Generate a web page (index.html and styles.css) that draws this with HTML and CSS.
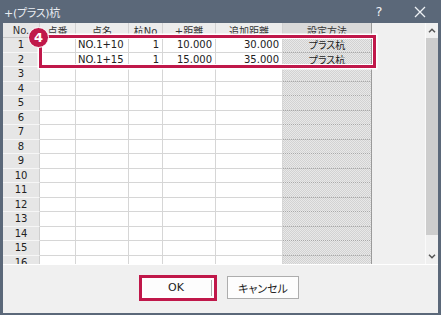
FILE: index.html
```html
<!DOCTYPE html>
<html lang="ja">
<head>
<meta charset="utf-8">
<title>+(プラス)杭</title>
<link rel="stylesheet" href="styles.css">
</head>
<body>
<div class="window">
  <div class="titlebar">
    <span class="title">+(プラス)杭</span>
    <span class="help">?</span>
    <span class="close"><svg width="12" height="12" viewBox="0 0 12 12"><path d="M1 1L11 11M11 1L1 11" stroke="#eef1f5" stroke-width="1.3" fill="none"/></svg></span>
  </div>
  <div class="main">
    <div class="gridarea">
      <div class="grid">
        <div class="h rhh">No.</div><div class="h">点番</div><div class="h">点名</div><div class="h">杭No</div><div class="h">+距離</div><div class="h">追加距離</div><div class="h hs">設定方法</div>

        <div class="rh">1</div><div class="c"></div><div class="c l">NO.1+10</div><div class="c r">1</div><div class="c r">10.000</div><div class="c r">30.000</div><div class="c s">プラス杭</div>
        <div class="rh">2</div><div class="c"></div><div class="c l">NO.1+15</div><div class="c r">1</div><div class="c r">15.000</div><div class="c r">35.000</div><div class="c s">プラス杭</div>
        <div class="rh">3</div><div class="c"></div><div class="c"></div><div class="c"></div><div class="c"></div><div class="c"></div><div class="c s"></div>
        <div class="rh">4</div><div class="c"></div><div class="c"></div><div class="c"></div><div class="c"></div><div class="c"></div><div class="c s"></div>
        <div class="rh">5</div><div class="c"></div><div class="c"></div><div class="c"></div><div class="c"></div><div class="c"></div><div class="c s"></div>
        <div class="rh">6</div><div class="c"></div><div class="c"></div><div class="c"></div><div class="c"></div><div class="c"></div><div class="c s"></div>
        <div class="rh">7</div><div class="c"></div><div class="c"></div><div class="c"></div><div class="c"></div><div class="c"></div><div class="c s"></div>
        <div class="rh">8</div><div class="c"></div><div class="c"></div><div class="c"></div><div class="c"></div><div class="c"></div><div class="c s"></div>
        <div class="rh">9</div><div class="c"></div><div class="c"></div><div class="c"></div><div class="c"></div><div class="c"></div><div class="c s"></div>
        <div class="rh">10</div><div class="c"></div><div class="c"></div><div class="c"></div><div class="c"></div><div class="c"></div><div class="c s"></div>
        <div class="rh">11</div><div class="c"></div><div class="c"></div><div class="c"></div><div class="c"></div><div class="c"></div><div class="c s"></div>
        <div class="rh">12</div><div class="c"></div><div class="c"></div><div class="c"></div><div class="c"></div><div class="c"></div><div class="c s"></div>
        <div class="rh">13</div><div class="c"></div><div class="c"></div><div class="c"></div><div class="c"></div><div class="c"></div><div class="c s"></div>
        <div class="rh">14</div><div class="c"></div><div class="c"></div><div class="c"></div><div class="c"></div><div class="c"></div><div class="c s"></div>
        <div class="rh">15</div><div class="c"></div><div class="c"></div><div class="c"></div><div class="c"></div><div class="c"></div><div class="c s"></div>
        <div class="rh">16</div><div class="c"></div><div class="c"></div><div class="c"></div><div class="c"></div><div class="c"></div><div class="c s"></div>
      </div>
    </div>
    <div class="scrollbar">
      <div class="arrow"><svg width="8" height="5" viewBox="0 0 8 5"><path d="M1 4.2L4 1.2L7 4.2" stroke="#555" stroke-width="1.5" fill="none"/></svg></div>
      <div class="thumb"></div>
      <div class="track"></div>
      <div class="arrow"><svg width="8" height="5" viewBox="0 0 8 5"><path d="M1 0.8L4 3.8L7 0.8" stroke="#555" stroke-width="1.5" fill="none"/></svg></div>
    </div>
  </div>
  <div class="footer">
    <button class="btn ok">OK</button>
    <button class="btn">キャンセル</button>
  </div>
  <div class="annot-box"></div>
  <div class="badge">4</div>
</div>
</body>
</html>
```
FILE: styles.css
```css
body {
  margin: 0;
}
.window {
  position: relative;
  width: 441px;
  height: 315px;
  background: #5b6879;
  display: flex;
  flex-direction: column;
  font-family: "DejaVu Sans", "Noto Sans CJK JP", sans-serif;
  font-feature-settings: "palt";
  color: #222;
  overflow: hidden;
}
.titlebar {
  height: 23px;
  flex: none;
  display: flex;
  align-items: center;
  color: #e9edf2;
  padding-left: 4px;
}
.title {
  flex: 1;
  font-size: 11px;
  letter-spacing: -0.3px;
}
.help {
  width: 20px;
  text-align: center;
  font-size: 13px;
  margin-right: 10px;
  color: #eef1f5;
}
.close {
  width: 42px;
  display: flex;
  justify-content: center;
  align-items: center;
}
.main {
  height: 241px;
  flex: none;
  display: flex;
  margin: 0 3px;
}
.gridarea {
  flex: 1;
  background: #f0f0f0;
  overflow: hidden;
}
.grid {
  display: grid;
  grid-template-columns: 37px 36px 53px 34px 53px 67px 89px;
  grid-template-rows: 15px;
  grid-auto-rows: 14.5px;
  width: 369px;
  font-size: 10px;
}
.grid > div {
  box-sizing: border-box;
  display: flex;
  align-items: center;
  white-space: nowrap;
  overflow: hidden;
}
.h {
  background: #ececec;
  border-right: 1px solid #d2d2d2;
  border-bottom: 1px solid #c6c6c6;
  justify-content: center;
  color: #333;
}
.rhh {
  background: #e6e6e6;
}
.hs {
  background: #d9d9d9;
  border-right: 1px solid #9a9a9a;
}
.rh {
  background: #e6e6e6;
  border-right: 1px solid #cfcfcf;
  border-bottom: 1px solid #f6f6f6;
  justify-content: center;
}
.c {
  background: #fff;
  border-right: 1px solid #d6d6d6;
  border-bottom: 1px solid #d6d6d6;
}
.l {
  padding-left: 2px;
}
.r {
  justify-content: flex-end;
  padding-right: 3px;
}
.s {
  justify-content: center;
  background: repeating-conic-gradient(#d2d2d2 0 25%, #e8e8e8 0 50%) 0 0 / 2px 2px;
  border-right: 1px solid #9a9a9a;
  border-bottom: 1px dotted #a8a8a8;
}
.scrollbar {
  width: 13px;
  flex: none;
  display: flex;
  flex-direction: column;
  background: #f0f0f0;
  border-left: 1px solid #fafafa;
  box-sizing: border-box;
}
.arrow {
  height: 15px;
  flex: none;
  display: flex;
  align-items: center;
  justify-content: center;
}
.thumb {
  height: 197px;
  flex: none;
  background: #cdcdcd;
}
.track {
  flex: 1;
}
.footer {
  flex: 1;
  margin: 0 3px 2px;
  background: #f0f0f0;
  border-top: 1px solid #fff;
  padding: 11px 0 0 137px;
  display: flex;
  gap: 15px;
  align-items: flex-start;
}
.btn {
  position: relative;
  width: 72px;
  height: 23px;
  padding: 0;
  border: 1px solid #adadad;
  background: #fdfdfd;
  font-family: "DejaVu Sans", "Noto Sans CJK JP", sans-serif;
  font-feature-settings: "palt";
  font-size: 11px;
  color: #222;
}
.ok::after {
  content: "";
  position: absolute;
  left: -2px;
  top: -2px;
  right: -6px;
  bottom: -3px;
  border: 3px solid #c0184a;
  box-shadow: inset 0 0 0 2px #fff;
}
.annot-box {
  position: absolute;
  left: 39px;
  top: 35px;
  width: 337px;
  height: 33px;
  box-sizing: border-box;
  border: 3px solid #c0184a;
  box-shadow: 0 0 0 1.5px #fff, inset 0 0 0 1px #fff;
}
.badge {
  position: absolute;
  left: 28px;
  top: 27px;
  width: 21px;
  height: 21px;
  box-sizing: border-box;
  border-radius: 50%;
  background: #c0184a;
  border: 1.5px solid #fff;
  color: #fff;
  font-weight: bold;
  font-size: 13px;
  display: flex;
  align-items: center;
  justify-content: center;
}
```
